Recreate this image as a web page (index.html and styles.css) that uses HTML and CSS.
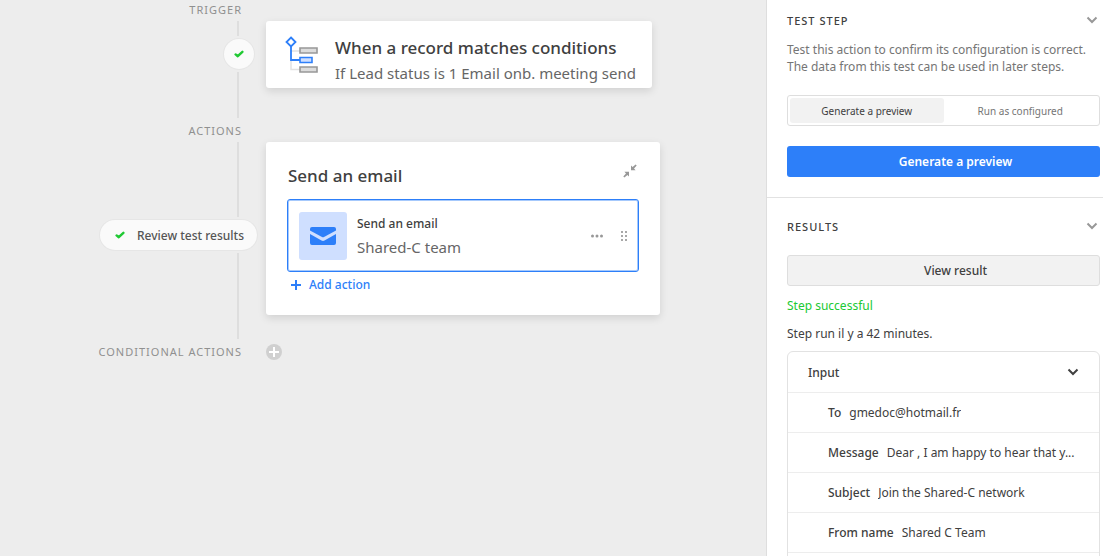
FILE: index.html
```html
<!DOCTYPE html>
<html lang="en">

<head>
    <meta charset="UTF-8">
    <meta name="viewport" content="width=device-width, initial-scale=1.0">
    <title>Automation</title>
    <link rel="stylesheet" href="styles.css">
</head>

<body>
    <main class="canvas">
        <!-- Trigger -->
        <div class="section-head">
            <h2 class="section-label">TRIGGER</h2>
        </div>
        <section class="section">
            <div class="rail">
                <span class="rail-line"></span>
                <span class="status">
                    <svg class="check" width="10" height="8" viewBox="0 0 10 8"><path d="M1.6 4.4 3.8 6.2 8.4 1.8" /></svg>
                </span>
                <span class="rail-line rail-rest"></span>
            </div>
            <article class="card trigger-card">
                <svg class="trigger-icon" width="34" height="38" viewBox="0 0 34 38" fill="none">
                    <path d="M6 15H15M6 24V33.500H15" stroke="#e2e2e2" stroke-width="1.500" />
                    <path d="M6 10V24H15" stroke="#2d7ff9" stroke-width="1.800" />
                    <path d="M6 1.500 10.500 6 6 10.500 1.500 6Z" fill="#fff" stroke="#2d7ff9" stroke-width="1.800" />
                    <path d="M15 12h17v5H15ZM15 31h17v5H15Z" fill="#dcdcdc" stroke="#989898" stroke-width="1.600" />
                    <path d="M15 21.500h12v5H15Z" fill="#cfdfff" stroke="#2d7ff9" stroke-width="1.600" />
                </svg>
                <div class="trigger-text">
                    <h3 class="card-title">When a record matches conditions</h3>
                    <p class="card-subtitle">If Lead status is 1 Email onb. meeting send</p>
                </div>
            </article>
        </section>

        <!-- Actions -->
        <div class="section-head">
            <h2 class="section-label">ACTIONS</h2>
        </div>
        <section class="section">
            <div class="rail">
                <span class="rail-line rail-long"></span>
                <button class="status status-pill">
                    <svg class="check" width="10" height="8" viewBox="0 0 10 8"><path d="M1.6 4.4 3.8 6.2 8.4 1.8" /></svg>
                    Review test results
                </button>
                <span class="rail-line rail-rest"></span>
            </div>
            <article class="card action-card">
                <header class="action-head">
                    <h3 class="card-title">Send an email</h3>
                    <button class="icon-button" aria-label="Collapse">
                        <svg width="14" height="14" viewBox="0 0 14 14" fill="#989898">
                            <path d="M8 1.500V6.200H12.600L11 4.600 13.700 1.500 12.600.400 9.600 3.100Z" />
                            <path d="M6 12.500V7.800H1.400L3 9.400.300 12.500 1.400 13.600 4.400 10.900Z" />
                        </svg>
                    </button>
                </header>
                <div class="action-item">
                    <span class="action-icon">
                        <svg width="28" height="20" viewBox="0 0 28 20" fill="#2d7ff9">
                            <path d="M1 4.500V3Q1 1 3 1H25Q27 1 27 3V4.500L15 11Q14 11.500 13 11Z" />
                            <path d="M1 8 12.500 14.500Q14 15.300 15.500 14.500L27 8V17Q27 19 25 19H3Q1 19 1 17Z" />
                        </svg>
                    </span>
                    <div class="action-text">
                        <h4 class="action-name">Send an email</h4>
                        <p class="card-subtitle">Shared-C team</p>
                    </div>
                    <button class="icon-button" aria-label="More options">
                        <svg width="14" height="10" viewBox="0 0 14 10" fill="#989898">
                            <circle cx="2.500" cy="5" r="1.500" /><circle cx="7" cy="5" r="1.500" /><circle cx="11.500" cy="5" r="1.500" />
                        </svg>
                    </button>
                    <button class="icon-button" aria-label="Reorder">
                        <svg width="8" height="12" viewBox="0 0 8 12" fill="#a8a8a8">
                            <path d="M1 1h2v2H1ZM5 1h2v2H5ZM1 5h2v2H1ZM5 5h2v2H5ZM1 9h2v2H1ZM5 9h2v2H5Z" />
                        </svg>
                    </button>
                </div>
                <button class="add-action">
                    <svg width="10" height="10" viewBox="0 0 10 10" stroke="#2d7ff9" stroke-width="2"><path d="M5 0V10M0 5H10" /></svg>
                    Add action
                </button>
            </article>
        </section>

        <!-- Conditional actions -->
        <div class="section-head">
            <h2 class="section-label">CONDITIONAL ACTIONS</h2>
            <button class="icon-button" aria-label="Add conditional action">
                <svg width="16" height="16" viewBox="0 0 16 16">
                    <circle cx="8" cy="8" r="8" fill="#d0d0d0" />
                    <path d="M8 3V13M3 8H13" stroke="#fff" stroke-width="2" />
                </svg>
            </button>
        </div>
    </main>

    <aside class="sidebar">
        <section class="panel test-panel">
            <header class="panel-head">
                <h2 class="panel-title">TEST STEP</h2>
                <button class="icon-button" aria-label="Collapse test step">
                    <svg class="chevron" width="12" height="8" viewBox="0 0 12 8"><path d="M1.500 1.500 6 6 10.500 1.500" /></svg>
                </button>
            </header>
            <p class="help">Test this action to confirm its configuration is correct. The data from this test can be used in later steps.</p>
            <div class="toggle">
                <button class="toggle-option selected">Generate a preview</button>
                <button class="toggle-option">Run as configured</button>
            </div>
            <button class="button primary">Generate a preview</button>
        </section>

        <section class="panel results-panel">
            <header class="panel-head">
                <h2 class="panel-title">RESULTS</h2>
                <button class="icon-button" aria-label="Collapse results">
                    <svg class="chevron" width="12" height="8" viewBox="0 0 12 8"><path d="M1.500 1.500 6 6 10.500 1.500" /></svg>
                </button>
            </header>
            <button class="button secondary">View result</button>
            <p class="message success">Step successful</p>
            <p class="message">Step run il y a 42 minutes.</p>
            <div class="output">
                <button class="output-head">
                    Input
                    <svg class="chevron dark" width="12" height="8" viewBox="0 0 12 8"><path d="M1.500 1.500 6 6 10.500 1.500" /></svg>
                </button>
                <dl class="fields">
                    <div class="field"><dt>To</dt><dd>gmedoc@hotmail.fr</dd></div>
                    <div class="field"><dt>Message</dt><dd>Dear , I am happy to hear that y...</dd></div>
                    <div class="field"><dt>Subject</dt><dd>Join the Shared-C network</dd></div>
                    <div class="field"><dt>From name</dt><dd>Shared C Team</dd></div>
                    <div class="field"></div>
                </dl>
            </div>
        </section>
    </aside>
</body>

</html>
```
FILE: styles.css
```css
* {
    box-sizing: border-box;
}

body {
    margin: 0;
    display: flex;
    min-height: 100vh;
    font-family: "Segoe UI", "Noto Sans", sans-serif;
    font-size: 12px;
    color: #404040;
    background-color: #fff;
}

h2, h3, h4, p, dl, dd {
    margin: 0;
}

button {
    font: inherit;
    color: inherit;
    background: none;
    border: none;
    padding: 0;
    cursor: pointer;
}

svg {
    display: block;
    flex: none;
}

.icon-button {
    display: flex;
    align-items: center;
}

/* Canvas */
.canvas {
    flex: 1;
    min-width: 0;
    margin-top: -1px;
    background-color: #ededed;
}

.section-head {
    display: flex;
    align-items: center;
    gap: 24px;
    height: 22px;
}

.section-label {
    width: 242px;
    text-align: right;
    font-size: 11px;
    line-height: 14px;
    font-weight: 400;
    letter-spacing: 1px;
    color: #909090;
}

.section {
    display: flex;
    align-items: flex-start;
    gap: 8px;
    padding-bottom: 2px;
}

.rail {
    width: 258px;
    align-self: stretch;
    display: flex;
    flex-direction: column;
    align-items: flex-end;
    gap: 3px;
}

.rail-line {
    width: 2px;
    height: 15px;
    margin-right: 19px;
    background-color: #dedede;
}

.rail-long {
    height: 75px;
}

.rail-rest {
    flex: 1;
}

.status {
    display: flex;
    align-items: center;
    justify-content: center;
    flex: none;
    width: 30px;
    height: 30px;
    margin-right: 4px;
    border-radius: 15px;
    background-color: #fafafa;
    box-shadow: 0 0 0 1px #e6e6e6;
    color: #555;
    font-weight: 500;
}

.status-pill {
    width: auto;
    margin-right: 1px;
    padding: 0 13px 0 15px;
    gap: 12px;
}

.check path {
    fill: none;
    stroke: #20c933;
    stroke-width: 2.400;
    stroke-linecap: round;
    stroke-linejoin: round;
}

.card {
    flex: 1;
    margin-right: 16px;
    background-color: #fff;
    border-radius: 3px;
    box-shadow: 0 3px 8px rgba(0, 0, 0, 0.12);
}

.card-title {
    font-size: 17px;
    line-height: 24px;
    font-weight: 500;
}

.card-subtitle {
    font-size: 15px;
    line-height: 24px;
    color: #666;
    white-space: nowrap;
}

.trigger-card {
    display: flex;
    gap: 16px;
    max-width: 386px;
    margin-bottom: 30px;
    padding: 15px 16px 3px 19px;
}

.trigger-text {
    display: flex;
    flex-direction: column;
    gap: 1px;
}

.action-card {
    max-width: 394px;
    margin-bottom: 24px;
    padding: 22px 21px 18px;
}

.action-head {
    display: flex;
    justify-content: space-between;
    padding: 0 2px 0 1px;
    margin-bottom: 11px;
}

.action-head .icon-button {
    height: 14px;
}

.action-item {
    display: flex;
    align-items: center;
    gap: 16px;
    height: 73px;
    padding: 0 10px 0 11px;
    border: 1px solid #2d7ff9;
    border-radius: 3px;
    box-shadow: inset 0 0 0 1px #a6c9fc;
}

.action-icon {
    display: flex;
    align-items: center;
    justify-content: center;
    width: 48px;
    height: 48px;
    border-radius: 3px;
    background-color: #cfdfff;
}

.action-text {
    flex: 1;
    margin-left: -6px;
}

.action-name {
    font-size: 12px;
    line-height: 22px;
    font-weight: 500;
}

.add-action {
    display: flex;
    align-items: center;
    gap: 8px;
    padding-left: 4px;
    line-height: 25px;
    font-weight: 500;
    color: #2d7ff9;
}

/* Sidebar */
.sidebar {
    width: 337px;
    height: 100vh;
    overflow: hidden;
    border-left: 1px solid #dedede;
}

.panel {
    padding: 0 3px 0 20px;
}

.test-panel {
    padding-top: 10px;
    padding-bottom: 20px;
    border-bottom: 1px solid #e2e2e2;
}

.results-panel {
    padding-top: 18px;
}

.panel-head {
    display: flex;
    align-items: center;
    justify-content: space-between;
    height: 20px;
    padding-right: 2px;
}

.panel-title {
    font-size: 11px;
    font-weight: 500;
    letter-spacing: 1px;
}

.chevron path {
    fill: none;
    stroke: #989898;
    stroke-width: 2;
}

.chevron.dark path {
    stroke: #404040;
}

.help {
    margin: 11px 0 20px;
    padding-right: 12px;
    line-height: 17px;
    color: #757575;
}

.toggle {
    display: flex;
    height: 31px;
    margin-bottom: 20px;
    padding: 2px;
    border: 1px solid #dedede;
    border-radius: 3px;
}

.toggle-option {
    flex: 1;
    font-size: 10px;
    color: #757575;
    border-radius: 3px;
}

.toggle-option.selected {
    color: #404040;
    background-color: #f2f2f2;
}

.button {
    display: block;
    width: 100%;
    height: 31px;
    padding-left: 24px;
    border-radius: 3px;
}

.primary {
    font-weight: 600;
    color: #fff;
    background-color: #2d7ff9;
}

.secondary {
    margin: 19px 0 10px;
    font-weight: 500;
    background-color: #f2f2f2;
    border: 1px solid #dedede;
}

.message {
    line-height: 20px;
    margin-bottom: 8px;
}

.message + .message {
    margin-bottom: 7px;
}

.success {
    color: #20c933;
}

.output {
    border: 1px solid #e2e2e2;
    border-radius: 6px;
}

.output-head {
    display: flex;
    align-items: center;
    justify-content: space-between;
    width: 100%;
    height: 40px;
    padding: 0 20px;
    font-weight: 500;
}

.field {
    display: flex;
    align-items: center;
    gap: 8px;
    height: 40px;
    padding: 0 20px 0 40px;
    border-top: 1px solid #ededed;
}

.field dt {
    flex: none;
    font-weight: 500;
}

.field dd {
    overflow: hidden;
    text-overflow: ellipsis;
    white-space: nowrap;
}
```
